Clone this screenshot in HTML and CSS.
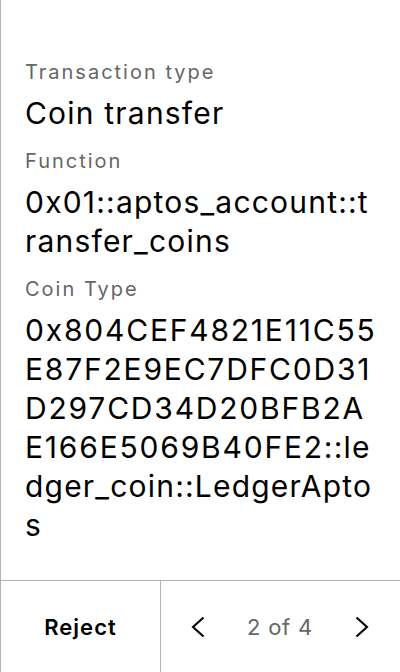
FILE: index.html
```html
<!DOCTYPE html>
<html lang="en">
<head>
<meta charset="utf-8">
<title>Review transaction</title>
<link rel="stylesheet" href="styles.css">
</head>
<body>
<div class="screen">
  <main class="content">
    <section class="field">
      <div class="label">Transaction type</div>
      <div class="value">Coin transfer</div>
    </section>
    <section class="field">
      <div class="label">Function</div>
      <div class="value">0x01::aptos_account::transfer_coins</div>
    </section>
    <section class="field">
      <div class="label">Coin Type</div>
      <div class="value"><span class="hex">0x804CEF4821E11C55E87F2E9EC7DFC0D31D297CD34D20BFB2AE166E5069B40FE2</span>::ledger_coin::LedgerAptos</div>
    </section>
  </main>
  <footer class="footer">
    <button class="reject">Reject</button>
    <nav class="pager">
      <button class="arrow" aria-label="Previous">
        <svg width="16" height="22" viewBox="0 0 16 22"><path d="M13.5 1.5 L3 11 L13.5 20.5" fill="none" stroke="#000" stroke-width="2.1"/></svg>
      </button>
      <span class="page">2 of 4</span>
      <button class="arrow" aria-label="Next">
        <svg width="16" height="22" viewBox="0 0 16 22"><path d="M2.5 1.5 L13 11 L2.5 20.5" fill="none" stroke="#000" stroke-width="2.1"/></svg>
      </button>
    </nav>
  </footer>
</div>
</body>
</html>
```
FILE: styles.css
```css
* { box-sizing: border-box; }
html, body { margin: 0; padding: 0; background: #fff; }
body { font-family: "Inter", "Noto Sans", sans-serif; color: #000; }
.screen {
  width: 400px;
  height: 672px;
  border-left: 1px solid #b3b3b3;
  display: flex;
  flex-direction: column;
}
.content {
  flex: 1;
  padding: 58px 20px 0 24px;
  display: flex;
  flex-direction: column;
  gap: 14px;
}
.field { display: flex; flex-direction: column; gap: 8px; }
.label {
  font-size: 20px;
  line-height: 28px;
  letter-spacing: 2px;
  color: #666;
}
.value {
  font-size: 30px;
  line-height: 39px;
  letter-spacing: 1.2px;
  word-break: break-all;
  color: #000;
}
.hex { letter-spacing: 1.8px; }
.footer {
  height: 92px;
  border-top: 1px solid #b3b3b3;
  display: flex;
}
.reject {
  width: 160px;
  border: 0;
  border-right: 1px solid #b3b3b3;
  background: #fff;
  font-family: inherit;
  font-size: 22px;
  font-weight: 600;
  letter-spacing: 1px;
  color: #000;
  padding: 0;
}
.pager {
  flex: 1;
  display: flex;
  align-items: center;
  justify-content: space-between;
  padding: 0 30px 0 29px;
}
.arrow {
  border: 0;
  background: none;
  padding: 0;
  display: flex;
}
.page {
  font-size: 22px;
  letter-spacing: 0.8px;
  color: #666;
}
```
